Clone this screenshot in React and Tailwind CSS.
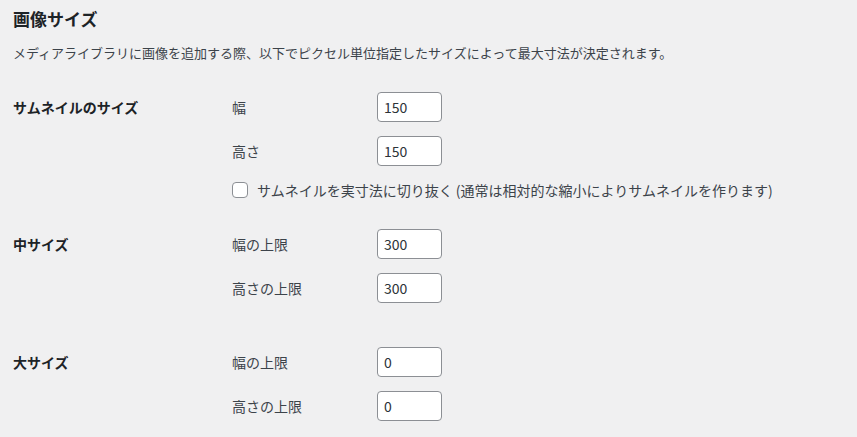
export default function App() {
  const font = { fontFamily: '"Noto Sans CJK JP", "Noto Sans", sans-serif' };

  const NumberInput = ({ value }) => (
    <input
      type="text"
      defaultValue={value}
      className="w-[65px] h-[30px] rounded-[4px] border border-[#8c8f94] bg-white px-[6px] text-[14px] text-[#2c3338] outline-none"
      style={font}
    />
  );

  const Row = ({ label, value }) => (
    <div className="flex items-center h-[30px]">
      <span className="w-[145px] text-[14px] leading-[20px] text-[#3c434a]">{label}</span>
      <NumberInput value={value} />
    </div>
  );

  const Group = ({ title, children, className }) => (
    <div className={`flex ${className}`}>
      <div className="w-[219px] pt-[5px] text-[14px] leading-[20px] font-bold text-[#1d2327]">{title}</div>
      <div className="flex flex-col gap-[14px]">{children}</div>
    </div>
  );

  return (
    <div className="min-h-[437px] w-full bg-[#f0f0f1] pl-[13px]" style={font}>
      <h2 className="pt-[8px] text-[17px] leading-[22px] font-bold text-[#1d2327]">画像サイズ</h2>
      <p className="mt-[13px] text-[13px] leading-[20px] text-[#3c434a]">
        メディアライブラリに画像を追加する際、以下でピクセル単位指定したサイズによって最大寸法が決定されます。
      </p>

      <Group title="サムネイルのサイズ" className="mt-[29px]">
        <Row label="幅" value="150" />
        <Row label="高さ" value="150" />
        <label className="flex items-center h-[20px] text-[14px] leading-[20px] text-[#3c434a] whitespace-nowrap">
          <span className="w-[16px] h-[16px] rounded-[4px] border border-[#8c8f94] bg-white mr-[9px]" />
          サムネイルを実寸法に切り抜く&nbsp;(通常は相対的な縮小によりサムネイルを作ります)
        </label>
      </Group>

      <Group title="中サイズ" className="mt-[29px]">
        <Row label="幅の上限" value="300" />
        <Row label="高さの上限" value="300" />
      </Group>

      <Group title="大サイズ" className="mt-[44px]">
        <Row label="幅の上限" value="0" />
        <Row label="高さの上限" value="0" />
      </Group>
    </div>
  );
}
